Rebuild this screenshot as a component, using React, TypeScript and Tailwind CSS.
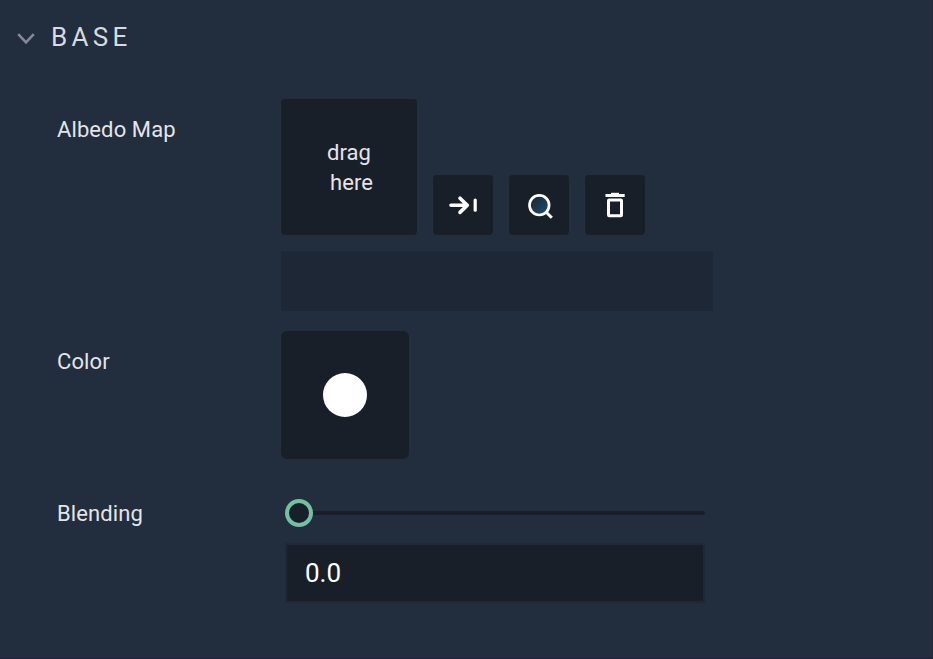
import type { ReactNode } from 'react';

function Row({ label, height, children }: { label: string; height: string; children: ReactNode }) {
  return (
    <div className={`flex ${height}`}>
      <div className="mt-[16px] h-[30px] w-[224px] shrink-0 text-[22px] leading-[30px] tracking-[0.1px]">{label}</div>
      <div>{children}</div>
    </div>
  );
}

function ToolButton({ children }: { children: ReactNode }) {
  return <button className="flex size-[60px] items-center justify-center rounded-[4px] bg-[#191f29]">{children}</button>;
}

export default function App() {
  return (
    <div className="h-[659px] w-[933px] overflow-hidden border-r border-b border-r-[#202a3b] border-b-[#202239] bg-[#222d3d] font-['Roboto',sans-serif] text-[#e3e5e8]">
      <header className="flex h-[74px] items-center pl-[17px]">
        <svg className="mt-[3px] h-[14px] w-[18px]" viewBox="0 0 18 14" fill="none" stroke="#858995" strokeWidth="2.6">
          <path d="M1.2 2.2 9 10.4 16.8 2.2" />
        </svg>
        <h1 className="ml-[16px] text-[26px] leading-[30px] tracking-[4.3px] text-[#d9dbdf]">BASE</h1>
      </header>
      <main className="flex flex-col gap-5 pt-[25px] pl-[57px]">
        <Row label="Albedo Map" height="h-[212px]">
          <div className="flex items-end gap-4">
            <div className="flex size-[136px] flex-col items-center justify-center rounded-[4px] bg-[#191f29] pt-[1px] text-[22px] leading-[30px] tracking-[0.1px]">
              <span>drag</span>
              <span className="pl-[5px]">here</span>
            </div>
            <ToolButton>
              <svg className="size-[60px]" viewBox="0 0 60 60" fill="none" stroke="#fff">
                <path d="M18 30.3H34M27 23.2 34.3 30.3 27 37.4" strokeWidth="3.6" strokeLinecap="round" strokeLinejoin="round" />
                <path d="M42.2 25V35.2" strokeWidth="3.2" strokeLinecap="round" />
              </svg>
            </ToolButton>
            <ToolButton>
              <svg className="size-[60px]" viewBox="0 0 60 60" fill="none" stroke="#fff">
                <defs>
                  <linearGradient id="lens" x1="0" y1="0" x2="1" y2="1">
                    <stop offset="0.15" stopColor="#1b2733" />
                    <stop offset="1" stopColor="#1c5278" />
                  </linearGradient>
                </defs>
                <circle cx="30.3" cy="30.2" r="9.8" fill="url(#lens)" strokeWidth="2.7" />
                <path d="M37.2 37.2 42.8 42.8" strokeWidth="3" />
              </svg>
            </ToolButton>
            <ToolButton>
              <svg className="size-[60px]" viewBox="0 0 60 60" fill="none" stroke="#fff">
                <path d="M20.5 20.5H39.7" strokeWidth="3" />
                <path d="M26 18.8H34" strokeWidth="2" />
                <rect x="23.5" y="25" width="13" height="15.7" rx="0.7" strokeWidth="3" />
              </svg>
            </ToolButton>
          </div>
          <div className="mt-4 h-[60px] w-[432px] bg-[#1e2736]" />
        </Row>
        <Row label="Color" height="h-[128px]">
          <div className="flex size-[128px] items-center justify-center rounded-[6px] bg-[#191f29]">
            <div className="size-[44px] rounded-full bg-white" />
          </div>
        </Row>
        <Row label="Blending" height="mt-[4px] h-[120px]">
          <div className="mt-[16px] ml-[4px] flex h-[28px] items-center">
            <div className="size-[28px] rounded-full border-4 border-[#72c1a0] bg-[#191f29]" />
            <div className="h-[4px] w-[392px] rounded-r-[2px] bg-[#191f29]" />
          </div>
          <div className="mt-[16px] ml-[4px] flex h-[60px] w-[420px] items-center border-2 border-[#1f2837] bg-[#191f29] pl-[18px] text-[26px] leading-[30px] text-white">0.0</div>
        </Row>
      </main>
    </div>
  );
}
